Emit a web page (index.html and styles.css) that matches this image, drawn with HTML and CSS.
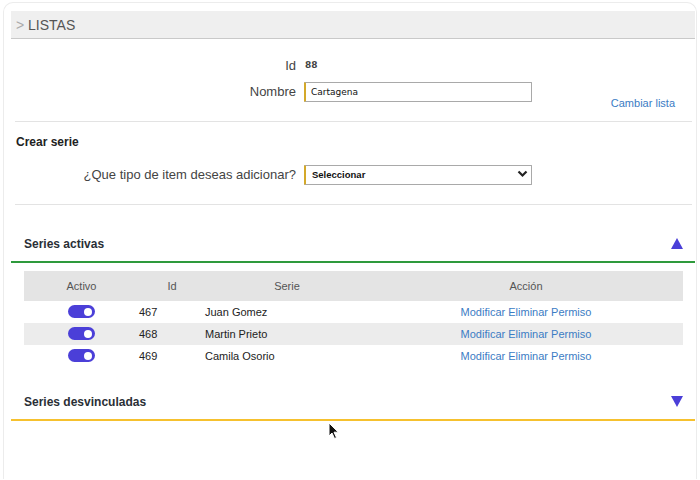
FILE: index.html
```html
<!DOCTYPE html>
<html lang="es">
<head>
  <meta charset="UTF-8" />
  <meta name="viewport" content="width=device-width, initial-scale=1.0"/>
  <title>Listas</title>
  <link rel="stylesheet" href="styles.css">
</head>
<body>
  <div class="card">
    <div class="page-title"><span class="crumb">&gt;</span> LISTAS</div>

    <div class="field-row id-row">
      <label class="field-label">Id</label>
      <span class="field-value">88</span>
    </div>
    <div class="field-row name-row">
      <label class="field-label" for="nombre">Nombre</label>
      <input type="text" id="nombre" class="field-input" value="Cartagena" />
      <a href="#" class="link change-link">Cambiar lista</a>
    </div>

    <hr class="divider" />

    <h3 class="block-title">Crear serie</h3>
    <div class="field-row select-row">
      <label class="field-label" for="tipo">¿Que tipo de item deseas adicionar?</label>
      <div class="select-wrap">
        <select id="tipo" class="field-input">
          <option>Seleccionar</option>
        </select>
        <svg class="chevron" width="11" height="8" viewBox="0 0 11 8"><path d="M1.5 1.5 L5.5 5.5 L9.5 1.5" fill="none" stroke="#222" stroke-width="2.2"/></svg>
      </div>
    </div>

    <hr class="divider divider-low" />

    <div class="section-head green">
      <span>Series activas</span>
      <span class="tri tri-up"></span>
    </div>

    <table class="series">
      <thead>
        <tr>
          <th class="c-act">Activo</th>
          <th class="c-id">Id</th>
          <th class="c-name">Serie</th>
          <th class="c-acc">Acción</th>
        </tr>
      </thead>
      <tbody>
        <tr>
          <td class="c-act"><span class="toggle"></span></td>
          <td>467</td>
          <td>Juan Gomez</td>
          <td class="c-acc"><a href="#" class="link">Modificar</a> <a href="#" class="link">Eliminar</a> <a href="#" class="link">Permiso</a></td>
        </tr>
        <tr>
          <td class="c-act"><span class="toggle"></span></td>
          <td>468</td>
          <td>Martin Prieto</td>
          <td class="c-acc"><a href="#" class="link">Modificar</a> <a href="#" class="link">Eliminar</a> <a href="#" class="link">Permiso</a></td>
        </tr>
        <tr>
          <td class="c-act"><span class="toggle"></span></td>
          <td>469</td>
          <td>Camila Osorio</td>
          <td class="c-acc"><a href="#" class="link">Modificar</a> <a href="#" class="link">Eliminar</a> <a href="#" class="link">Permiso</a></td>
        </tr>
      </tbody>
    </table>

    <div class="section-head yellow">
      <span>Series desvinculadas</span>
      <span class="tri tri-down"></span>
    </div>
  </div>

  <!-- puntero del mouse -->
  <svg class="cursor" width="12" height="18" viewBox="0 0 12 18">
    <path d="M1 1 L1 14 L4 11 L6.5 16.5 L8.5 15.6 L6 10.2 L10.3 10.2 Z" fill="#111" stroke="#fff" stroke-width="1"/>
  </svg>
</body>
</html>
```

FILE: styles.css
```css
html, body {
  margin: 0;
  overflow: hidden;
}
body {
  font-family: 'Liberation Sans', Arial, sans-serif;
  background: #fff;
  color: #222;
}
.card {
  margin: 2px 3px 0 3px;
  border: 1px solid #ececec;
  border-bottom: none;
  border-radius: 10px 10px 0 0;
  padding: 8px 1px 0 7px;
  height: calc(100vh - 3px);
  box-sizing: border-box;
}
.page-title {
  height: 27px;
  line-height: 28px;
  background: #efefef;
  border-bottom: 1px solid #c9c9c9;
  padding-left: 5px;
  font-size: 14px;
  color: #555;
}
.crumb {
  color: #aaa;
}
.field-row {
  display: flex;
  align-items: center;
}
.id-row {
  margin-top: 18px;
  height: 16px;
}
.field-label {
  width: 293px;
  padding-right: 8px;
  box-sizing: border-box;
  text-align: right;
  font-size: 13px;
  color: #444;
}
.field-value {
  font-family: 'DejaVu Sans', sans-serif;
  font-size: 9px;
  font-weight: bold;
  color: #444;
  padding-left: 1px;
}
.name-row {
  margin-top: 9px;
  align-items: flex-start;
}
.name-row .field-label {
  line-height: 20px;
}
.field-input {
  width: 228px;
  height: 20px;
  box-sizing: border-box;
  border: 1px solid #a9a9a9;
  border-left: 2px solid #d4a92a;
  border-radius: 1px;
  padding: 0 5px;
  font-family: 'DejaVu Sans', sans-serif;
  font-size: 9px;
  color: #111;
  background: #fff;
  margin: 0;
}
.link {
  color: #3b7cc4;
  text-decoration: none;
  font-size: 11px;
}
.change-link {
  margin-left: auto;
  margin-right: 20px;
  margin-top: 15px;
  line-height: 13px;
}
.divider {
  border: none;
  border-top: 1px solid #e3e3e3;
  margin: 11px 3px 0 4px;
}
.divider-low {
  margin-top: 19px;
}
.block-title {
  margin: 13px 0 0 5px;
  font-size: 12px;
  line-height: 14px;
  color: #222;
}
.select-row {
  margin-top: 15px;
}
.select-wrap {
  position: relative;
}
.select-wrap select {
  appearance: none;
  -webkit-appearance: none;
  font-family: 'Liberation Sans', sans-serif;
  font-size: 9.5px;
  font-weight: bold;
  padding-left: 6px;
}
.chevron {
  position: absolute;
  right: 4px;
  top: 6px;
  pointer-events: none;
}
.section-head {
  display: flex;
  justify-content: space-between;
  align-items: center;
  padding: 0 12px 10px 13px;
  font-size: 12px;
  line-height: 14px;
  font-weight: bold;
  color: #2a2f36;
}
.section-head.green {
  margin-top: 32px;
  border-bottom: 2px solid #2e9a3c;
}
.section-head.yellow {
  margin-top: 28px;
  border-bottom: 2px solid #f6c12e;
}
.tri {
  width: 0;
  height: 0;
  border-left: 6px solid transparent;
  border-right: 6px solid transparent;
}
.tri-up {
  border-bottom: 11px solid #4b3fd8;
}
.tri-down {
  border-top: 11px solid #4b3fd8;
}
.series {
  margin: 8px 12px 0 13px;
  width: 659px;
  border-collapse: collapse;
  table-layout: fixed;
  font-size: 11px;
}
.series th {
  height: 30px;
  background: #e4e4e4;
  font-weight: normal;
  color: #555;
  text-align: center;
  padding: 0;
}
.series td {
  height: 22px;
  padding: 0;
  color: #222;
}
.series tbody tr:nth-child(2) td {
  background: #ececec;
}
.c-act { width: 115px; }
.c-id { width: 66px; }
.c-name { width: 164px; }
.series td.c-act, .series td.c-acc {
  text-align: center;
}
.toggle {
  display: inline-block;
  vertical-align: middle;
  position: relative;
  width: 27px;
  height: 13px;
  border-radius: 7px;
  background: #4b3fd8;
}
.toggle::after {
  content: '';
  position: absolute;
  right: 3px;
  top: 2.5px;
  width: 8px;
  height: 8px;
  border-radius: 50%;
  background: #fff;
}
.cursor {
  position: absolute;
  left: 328px;
  top: 422px;
}
```
